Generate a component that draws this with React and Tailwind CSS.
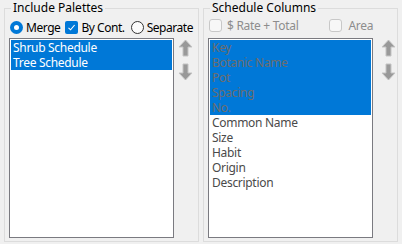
import React from 'react';

const LEFT_ITEMS = ['Shrub Schedule', 'Tree Schedule'];
const RIGHT_SELECTED = ['Key', 'Botanic Name', 'Pot', 'Spacing', 'No.'];
const RIGHT_ITEMS = ['Common Name', 'Size', 'Habit', 'Origin', 'Description'];

function GroupBox({ title, children }) {
  return (
    <fieldset className="m-0 h-[242px] w-[195px] min-w-0 border border-[#dcdcdc] p-0">
      <legend className="ml-[6px] px-[2px] text-[12px] leading-[16px] tracking-normal text-black">{title}</legend>
      {children}
    </fieldset>
  );
}

function Arrow({ down }) {
  return (
    <svg width="15" height="18" viewBox="0 0 15 18" className={down ? 'rotate-180' : ''}>
      <polygon
        points="7.5,1 14,8 10,8 10,17 5,17 5,8 1,8"
        fill="#999999"
        stroke="#c4c4c4"
        strokeWidth="1"
      />
    </svg>
  );
}

function RadioOn() {
  return (
    <span className="flex h-[13px] w-[13px] shrink-0 items-center justify-center rounded-full bg-[#0078d7]">
      <span className="block h-[5px] w-[5px] rounded-full bg-white" />
    </span>
  );
}

function RadioOff() {
  return <span className="block h-[13px] w-[13px] shrink-0 rounded-full border border-[#333333] bg-[#fbfbfb]" />;
}

function CheckOn() {
  return (
    <span className="flex h-[13px] w-[13px] shrink-0 items-center justify-center rounded-[2px] bg-[#0078d7]">
      <svg width="9" height="9" viewBox="0 0 9 9">
        <path d="M1.5 4.8 L3.6 6.8 L7.6 2" fill="none" stroke="white" strokeWidth="1.1" />
      </svg>
    </span>
  );
}

function CheckDisabled() {
  return <span className="block h-[13px] w-[13px] shrink-0 rounded-[3px] border border-[#c8c8c8] bg-[#f7f7f7]" />;
}

export default function App() {
  return (
    <div className="flex h-[244px] w-[402px] gap-[4px] overflow-hidden bg-[#f0f0f0] pl-[4px] font-['Noto_Sans',sans-serif] text-[12px] tracking-[-0.3px]">
      <GroupBox title="Include Palettes">
        <div className="mt-[5px] flex h-[13px] items-center pl-[5px] leading-[13px] tracking-[-0.45px]">
          <RadioOn />
          <span className="ml-[3px]">Merge</span>
          <span className="ml-[5px]">
            <CheckOn />
          </span>
          <span className="ml-[3px]">By Cont.</span>
          <span className="ml-[6px]">
            <RadioOff />
          </span>
          <span className="ml-[3px]">Separate</span>
        </div>
        <div className="mt-[4px] flex pl-[4px]">
          <div className="h-[200px] w-[165px] border border-[#7a7a80] bg-white p-px leading-[15px]">
            {LEFT_ITEMS.map((item) => (
              <div key={item} className="h-[15px] bg-[#0078d7] pl-[2px] text-white">
                {item}
              </div>
            ))}
          </div>
          <div className="ml-[4px] flex flex-col gap-[6px] pt-[1px]">
            <Arrow />
            <Arrow down />
          </div>
        </div>
      </GroupBox>

      <GroupBox title="Schedule Columns">
        <div className="mt-[3px] flex h-[13px] items-center pl-[5px] leading-[13px] text-[#8d8d8d]">
          <CheckDisabled />
          <span className="ml-[5px]">$ Rate + Total</span>
          <span className="ml-[31px]">
            <CheckDisabled />
          </span>
          <span className="ml-[6px]">Area</span>
        </div>
        <div className="mt-[6px] flex pl-[4px]">
          <div className="h-[200px] w-[165px] border border-[#7a7a80] bg-white p-px leading-[15px]">
            {RIGHT_SELECTED.map((item) => (
              <div key={item} className="h-[15px] bg-[#0078d7] pl-[2px] text-[#6d6d6d]">
                {item}
              </div>
            ))}
            {RIGHT_ITEMS.map((item) => (
              <div key={item} className="h-[15px] pl-[2px] text-[#4a4a4a]">
                {item}
              </div>
            ))}
          </div>
          <div className="ml-[8px] flex flex-col gap-[6px] pt-[1px]">
            <Arrow />
            <Arrow down />
          </div>
        </div>
      </GroupBox>
    </div>
  );
}
